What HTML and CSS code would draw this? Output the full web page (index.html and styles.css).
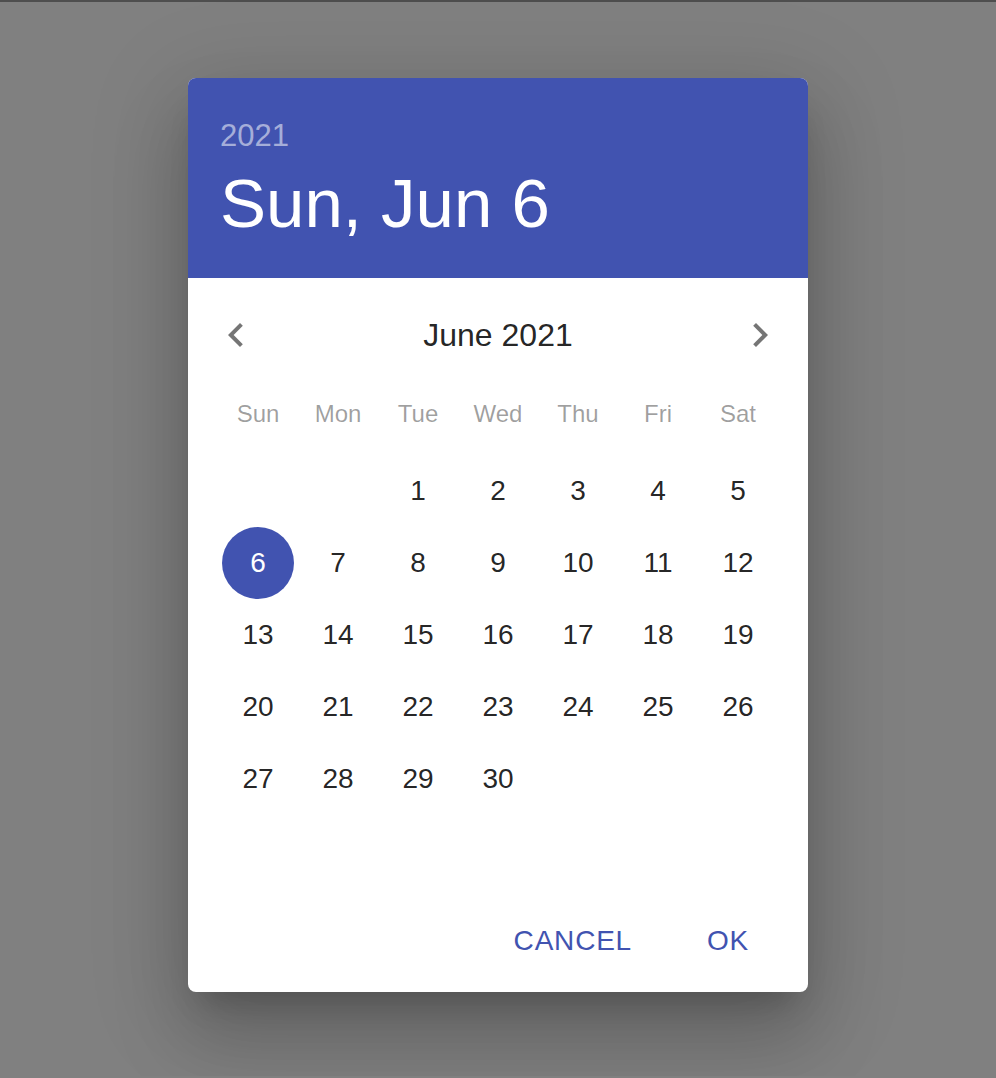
FILE: index.html
```html
<!DOCTYPE html>
<html>
<head>
    <title>Date Picker</title>
    <link rel="stylesheet" href="styles.css">
</head>
<body>
    <div class="backdrop">
        <div class="dialog">
            <div class="toolbar">
                <div class="toolbar-year">2021</div>
                <div class="toolbar-date">Sun, Jun 6</div>
            </div>

            <div class="switch-header">
                <button class="arrow">
                    <svg viewBox="0 0 24 24"><path d="M15.41 7.41L14 6l-6 6 6 6 1.41-1.41L10.83 12z"/></svg>
                </button>
                <div class="month-title">June 2021</div>
                <button class="arrow">
                    <svg viewBox="0 0 24 24"><path d="M10 6L8.59 7.41 13.17 12l-4.58 4.59L10 18l6-6z"/></svg>
                </button>
            </div>

            <div class="week-labels">
                <span>Sun</span><span>Mon</span><span>Tue</span><span>Wed</span><span>Thu</span><span>Fri</span><span>Sat</span>
            </div>

            <div class="days">
                <span class="day empty"></span>
                <span class="day empty"></span>
                <span class="day">1</span>
                <span class="day">2</span>
                <span class="day">3</span>
                <span class="day">4</span>
                <span class="day">5</span>
                <span class="day selected">6</span>
                <span class="day">7</span>
                <span class="day">8</span>
                <span class="day">9</span>
                <span class="day">10</span>
                <span class="day">11</span>
                <span class="day">12</span>
                <span class="day">13</span>
                <span class="day">14</span>
                <span class="day">15</span>
                <span class="day">16</span>
                <span class="day">17</span>
                <span class="day">18</span>
                <span class="day">19</span>
                <span class="day">20</span>
                <span class="day">21</span>
                <span class="day">22</span>
                <span class="day">23</span>
                <span class="day">24</span>
                <span class="day">25</span>
                <span class="day">26</span>
                <span class="day">27</span>
                <span class="day">28</span>
                <span class="day">29</span>
                <span class="day">30</span>
            </div>

            <div class="actions">
                <button class="text-btn">Cancel</button>
                <button class="text-btn">OK</button>
            </div>
        </div>
    </div>
</body>
</html>
```

FILE: styles.css
```css
html, body {
    margin: 0;
    padding: 0;
}
body {
    font-family: "Liberation Sans", Arial, sans-serif;
    background: #808080;
}
.backdrop {
    min-height: 1076px;
    border-top: 2px solid #4e4e4e;
    padding-top: 76px;
    box-sizing: border-box;
}
.dialog {
    width: 620px;
    margin: 0 auto;
    background: #fff;
    border-radius: 8px;
    overflow: hidden;
    box-shadow: 0 22px 30px -14px rgba(0,0,0,0.2),
                0 48px 76px 6px rgba(0,0,0,0.14),
                0 18px 92px 16px rgba(0,0,0,0.12);
}

/* blue header with the picked date */
.toolbar {
    height: 200px;
    box-sizing: border-box;
    padding: 38px 32px 0;
    background: #4153b0;
    color: #fff;
}
.toolbar-year {
    font-size: 31px;
    line-height: 40px;
    color: rgba(255,255,255,0.54);
}
.toolbar-date {
    margin-top: 8px;
    font-size: 69px;
    line-height: 80px;
}

/* month switcher */
.switch-header {
    display: flex;
    align-items: center;
    justify-content: space-between;
    margin: 9px 0 16px;
}
.arrow {
    width: 96px;
    height: 96px;
    padding: 24px;
    border: none;
    background: none;
    cursor: pointer;
}
.arrow svg {
    display: block;
    width: 48px;
    height: 48px;
    fill: rgba(0,0,0,0.54);
}
.month-title {
    font-size: 32px;
    color: rgba(0,0,0,0.87);
}

/* calendar grid */
.week-labels,
.days {
    display: grid;
    grid-template-columns: repeat(7, 80px);
    justify-content: center;
}
.week-labels span {
    height: 30px;
    line-height: 30px;
    text-align: center;
    font-size: 24px;
    color: rgba(0,0,0,0.38);
}
.days {
    margin-top: 26px;
    min-height: 432px;
    align-content: start;
}
.day {
    width: 72px;
    height: 72px;
    margin: 0 4px;
    border-radius: 50%;
    display: flex;
    align-items: center;
    justify-content: center;
    font-size: 28px;
    color: rgba(0,0,0,0.87);
}
.day.selected {
    background: #4153b0;
    color: #fff;
}

/* dialog buttons */
.actions {
    display: flex;
    justify-content: flex-end;
    gap: 16px;
    padding: 18px 16px 15px;
}
.text-btn {
    min-width: 128px;
    height: 72px;
    padding: 12px 16px;
    border: none;
    background: none;
    font-family: inherit;
    font-size: 28px;
    letter-spacing: 0.8px;
    text-transform: uppercase;
    color: #4153b0;
    cursor: pointer;
}
```
